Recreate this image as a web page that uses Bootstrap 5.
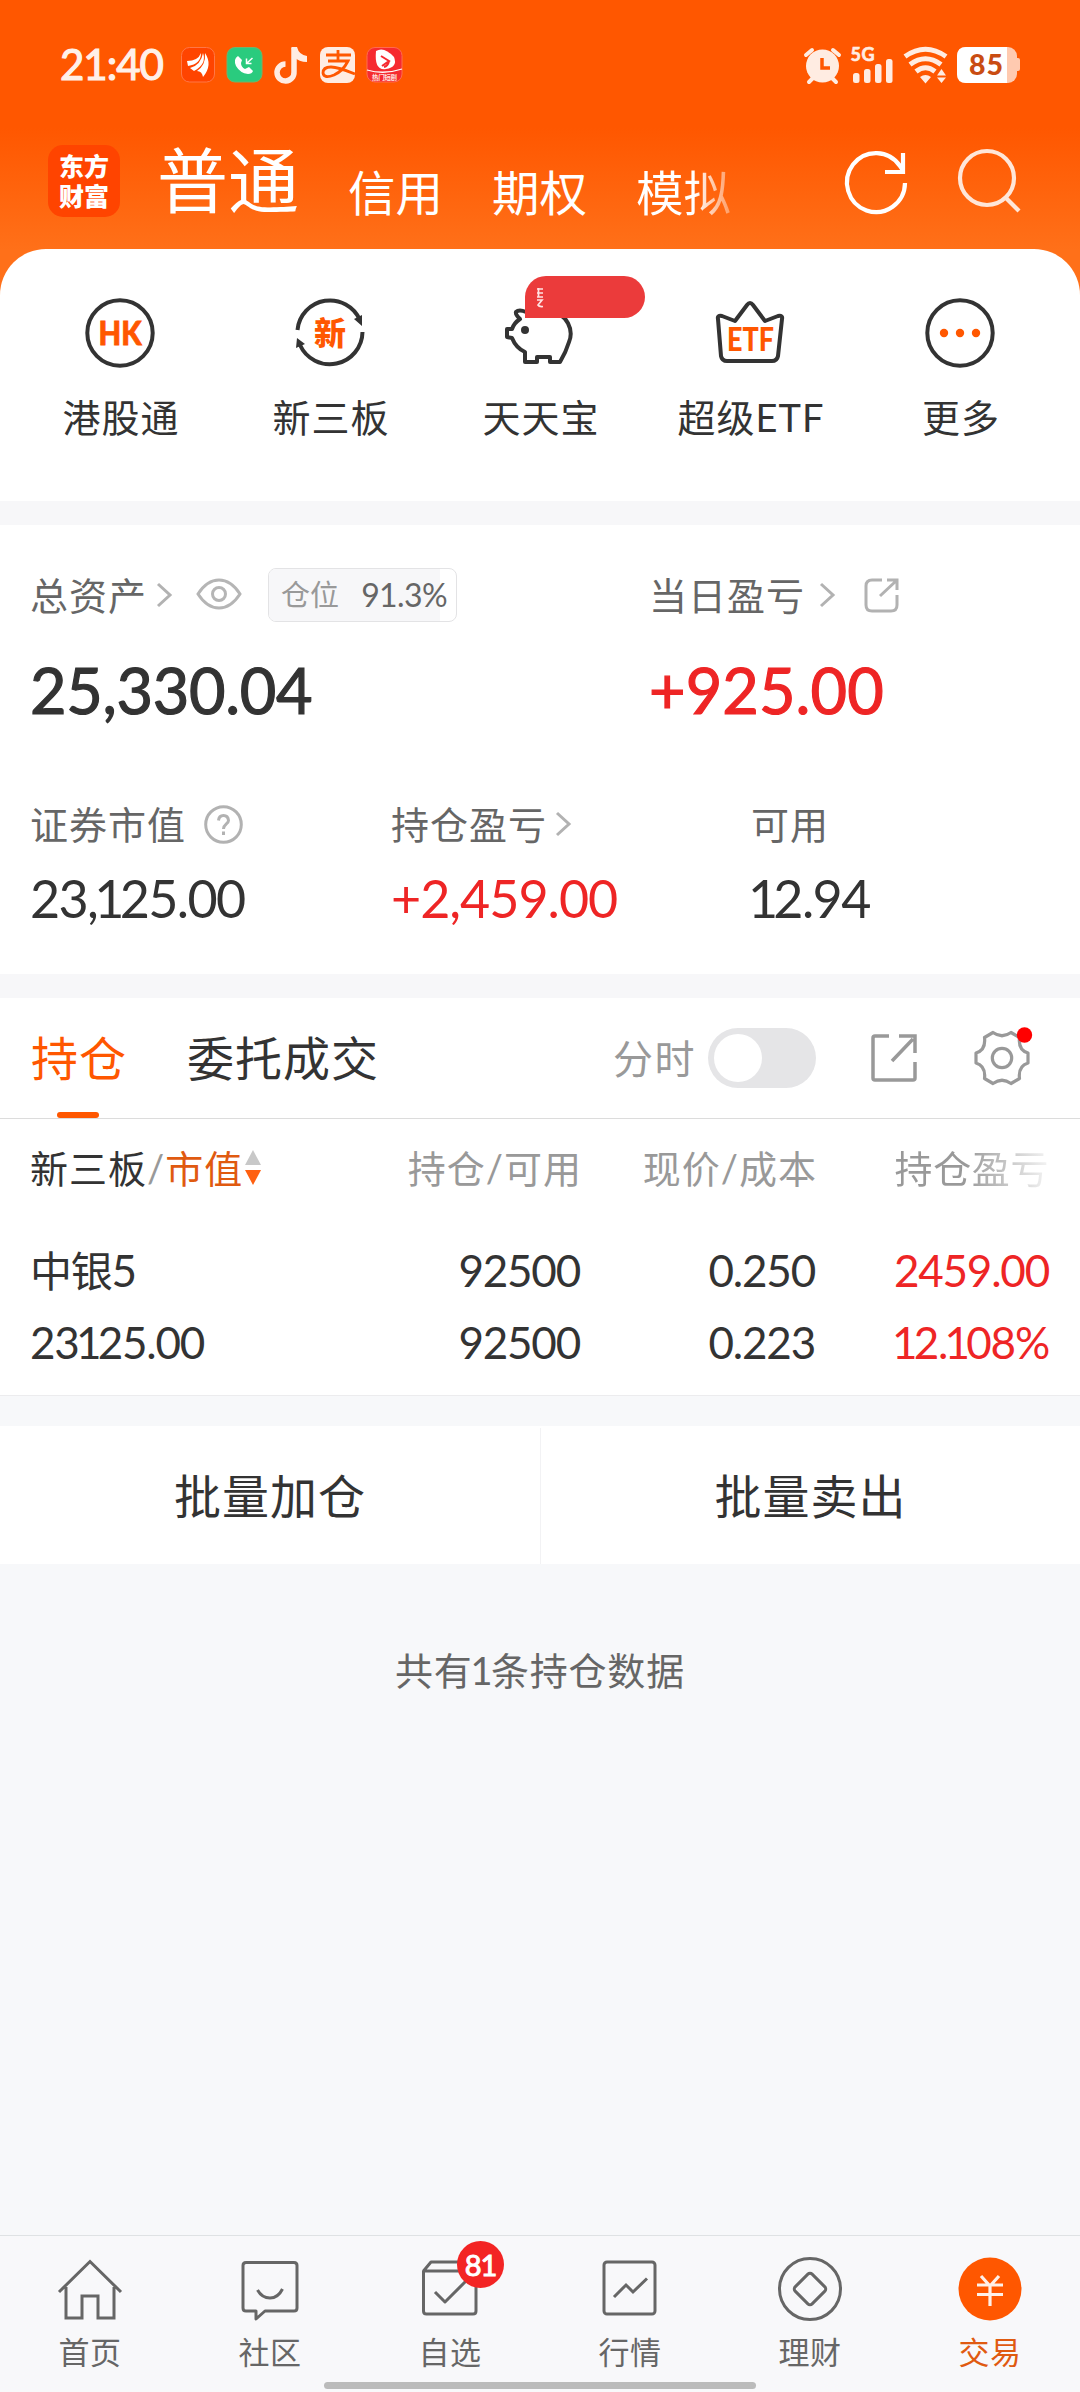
<!DOCTYPE html>
<html lang="zh-CN">
<head>
<meta charset="utf-8">
<meta name="viewport" content="width=device-width, initial-scale=1">
<title>东方财富 交易</title>
<link href="https://cdn.jsdelivr.net/npm/bootstrap@5.3.0/dist/css/bootstrap.min.css" rel="stylesheet">
<style>
:root{--ink:#333;--mid:#666;--soft:#999;--brand:#ff5700;--up:#ee2525}
body{font-family:Lato,"Noto Sans CJK SC",sans-serif;color:var(--ink);background:#f7f8fa;width:1080px;height:2392px;overflow:hidden;line-height:1}
svg{display:block;flex:none;overflow:visible}
.hero{height:295px;background:linear-gradient(#ff5700 0,#ff5700 128px,#ff7019 250px);margin-bottom:-46px}
.status{height:130px;padding:0 59px 0 60px}
.clock{font-size:42px;color:#fff0e8;width:121px;letter-spacing:-1px;-webkit-text-stroke:1.2px #fff0e8;margin-top:-3px}
.mkt{height:119px;padding:0 58px 0 48px}
.brandtile{width:72px;height:72px;border-radius:15px;background:#ff4400;color:#fff;font-size:25px;font-weight:900;line-height:30px;padding-top:6px;margin-top:-17px}
.mkt-on{font-size:71px;margin-left:37px;line-height:72px;margin-top:-20px;width:144px}
.mkt-tab{font-size:47.5px;margin-left:48px;line-height:48px;margin-top:7px;width:96px}
.mkt-on+.mkt-tab{margin-left:47px}
.fade-tab{background:linear-gradient(90deg,#fff 0,#fff 58px,rgba(255,255,255,.4) 92px);-webkit-background-clip:text;background-clip:text;color:transparent}
.sheet{height:252px;border-radius:46px 46px 0 0;padding:47px 15px 0}
.quick{width:210px}
.quick-t{font-size:38px;letter-spacing:1px;line-height:44px;margin-top:25px;padding-left:2px}
.tag{left:90px;top:-20px;width:120px;height:42px;border-radius:21px 21px 21px 0;background:#eb3b3b}
.gap24{height:24px;background:#f7f7f9}
.assets{height:449px;padding:42px 32px 0 30px}
.lbl{font-size:38px;letter-spacing:1px;color:var(--mid);line-height:56px;height:56px}
.big{font-size:63px;line-height:64px;letter-spacing:-.3px;-webkit-text-stroke:1.2px currentColor;margin-top:35px}
.big.c-up{letter-spacing:.1px}
.mid-n{font-size:52px;line-height:54px;letter-spacing:-1.6px;margin-top:19px}
.mid-n.c-up{letter-spacing:-1px}
.one{margin:0 -.06em}
.c-up{color:var(--up)}
.pos{width:189px;height:54px;border:1px solid #e3e3e5;border-radius:8px;background:#fff;margin-left:26px;overflow:hidden;color:var(--mid)}
.pos-fill{height:52px;background:#f7f7f9}
.pos-txt{inset:0;font-size:32px;letter-spacing:-.6px;padding:0 9px 0 12px}
.pos-txt small{font-size:29px;letter-spacing:0;color:var(--soft)}
.tabs{height:121px;border-bottom:1px solid #dcdcdc;padding:0 50px 0 31px}
.tab-t{font-size:47px;letter-spacing:1px;line-height:120px}
.tab-on{color:var(--brand)}
.tab-on::after{content:"";position:absolute;left:26px;bottom:0;width:42px;height:6px;border-radius:3px;background:var(--brand)}
.toggle{width:108px;height:60px;border-radius:30px;background:#e5e5e7;padding:6px}
.toggle span{width:48px;height:48px;border-radius:50%;background:#fff}
.hold{height:277px;padding:0 31px 0 30px;border-bottom:1px solid #ececee}
.hold-h{font-size:38px;letter-spacing:1px;color:var(--soft);height:98px}
.hold-h .text-end{padding-left:2px;margin-right:-2px}
.hold-r{font-size:44px;height:72px;letter-spacing:-1.2px}
.hold-r:nth-child(2){margin-top:17px}
.k1{width:320px}.k2{width:230px}.k3{width:235px}.k4{width:234px}
.hold-h .k2,.hold-h .k3{width:232px}.hold-h .k3{width:237px}
.fade-h{background:linear-gradient(90deg,#999 0,#999 70px,#f2f2f2 152px);-webkit-background-clip:text;background-clip:text;color:transparent;letter-spacing:.6px}
.batch{height:138px;margin-top:30px;font-size:47px;letter-spacing:1px;padding-top:2px}
.batch>div+div{border-left:1px solid #f2f2f4}
.tail{font-size:38px;letter-spacing:.8px;color:var(--mid);margin-top:84px;line-height:44px}
.dock{height:157px;background:#f8f8fa;border-top:1px solid #dfe2e4;color:var(--mid)}
.dock-i{width:180px;font-size:31px;letter-spacing:.6px;padding-top:17px}
.dock-i span{line-height:36px;margin-top:13px}
.num{left:97px;top:5px;width:47px;height:47px;border-radius:50%;background:#f32424;color:#fff;-webkit-text-stroke:1px #fff;font-size:29px;letter-spacing:-1px}
.grip{left:324px;bottom:3px;width:432px;height:7px;border-radius:4px;background:#bbb}
</style>
<script src="https://cdn.jsdelivr.net/npm/bootstrap@5.3.0/dist/js/bootstrap.bundle.min.js"></script>
</head>
<body class="d-flex flex-column">

<header class="hero">
  <div class="status d-flex align-items-center justify-content-between">
    <div class="d-flex align-items-center">
      <div class="clock">21:40</div>
      <svg width="222" height="36" viewBox="0 0 222 36">
        <rect x=".5" y=".5" width="33" height="34.500" rx="8" fill="#ff4400" stroke="#ff7747"/>
        <path d="M6 14Q17 14 20 6Q20 17 7 19zM9 21Q20 18 22 6Q26 17 13 24zM16 24Q25 18 24 6Q32 18 22 30Q21 24 16 24z" fill="#fff"/>
        <rect x="46" y=".5" width="35" height="34.500" rx="8" fill="#2acb7e" stroke="#6fb56b"/>
        <path d="M57 9Q52 12 55 19Q59 26 67 27Q71 27 72 24L68 20L64 22Q60 20 60 16L61 13z" fill="#fff"/><path d="M71.500 11L66 16M65.500 11.500V16.500H70.500" stroke="#fff" stroke-width="1.500" fill="none"/>
        <path d="M113 0V24A8.500 8.500 0 1 1 104.500 16" fill="none" stroke="#ffece2" stroke-width="5.500" transform="translate(0 1)"/><path d="M110.300 0H116Q118 8 126 9V15Q118 15 113 10z" fill="#ffece2"/>
        <rect x="139" y="0" width="35" height="36" rx="8" fill="#ffece2"/>
        <path d="M145 8H170M157 3V14M147 14H167Q162 24 153 28Q143 32 142 26Q142 20 150 20Q157 20 174 27" fill="none" stroke="#ff5700" stroke-width="2.800"/>
        <rect x="186" y=".5" width="35" height="34.500" rx="8" fill="#f62a30" stroke="#ff6a50"/>
        <path d="M195 4Q203 -1 213 10Q217 20 205 22Q193 24 195 4z" fill="#fff"/><path d="M200 9L208 14L201 19M208 14Q207 19 203 20" stroke="#f62a30" stroke-width="2" fill="none"/><path d="M186 23Q203 28 221 22" stroke="#fff" stroke-width="1.300" fill="none"/><text x="191" y="33" font-size="6.500" font-weight="700" fill="#ffe0dc" textLength="25" font-family="Noto Sans CJK SC">热门短剧</text>
      </svg>
    </div>
    <svg width="217" height="38" viewBox="804 46 217 38">
      <g fill="#ffece2">
        <circle cx="822.500" cy="66" r="16.500"/>
        <path d="M806 55L812 50M839 55L833 50M809 82L814 77M836 82L831 77" stroke="#ffece2" stroke-width="4" stroke-linecap="round"/>
        <path d="M822 58V68H830" fill="none" stroke="#ff5700" stroke-width="3.500"/>
        <text x="850.500" y="60.500" font-size="18" font-weight="700" textLength="24" stroke="#ffece2" stroke-width=".6">5G</text>
        <rect x="853" y="73" width="6.500" height="10" rx="2.500"/><rect x="864" y="69" width="6.500" height="14" rx="2.500"/><rect x="875" y="64" width="6.500" height="19" rx="2.500"/><rect x="886" y="59" width="6.500" height="24" rx="2.500"/>
        <g fill="none" stroke="#ffece2" stroke-width="5"><path d="M905 56.500Q925.500 42 946 56.500"/><path d="M910 64.500Q925.500 53 941 64.500"/><path d="M916 71.500Q925.500 64 935 71.500"/></g>
        <path d="M920 77Q925.500 73 931 77L925.500 83.500zM937 75.500L941.500 69L946 75.500zM937 77.500H946L941.500 83z"/>
        <rect x="957" y="47" width="60" height="36" rx="9" fill="#ffcab0"/><rect x="1015" y="58" width="5" height="13" rx="2" fill="#ffcab0"/>
        <path d="M966 47H1007V83H966Q957 83 957 74V56Q957 47 966 47z" fill="#fff"/>
        <text x="969" y="75" font-size="28.500" font-weight="900" textLength="34" fill="#c94c12">85</text>
      </g>
    </svg>
  </div>
  <div class="mkt d-flex align-items-center text-white">
    <div class="brandtile text-center">东方<br>财富</div>
    <div class="mkt-on">普通</div>
    <div class="mkt-tab">信用</div>
    <div class="mkt-tab">期权</div>
    <div class="mkt-tab fade-tab">模拟</div>
    <svg class="ms-auto" width="177" height="119" viewBox="845 130 177 119" fill="none" stroke="#fff" stroke-width="4.200">
      <path d="M905 183A29 29.500 0 1 1 900 166L903.500 171M903 153V172H885"/>
      <g stroke="#ffe6d8"><circle cx="987" cy="178" r="27"/><path d="M1006 198L1019 211"/></g>
    </svg>
  </div>
</header>

<section class="sheet bg-white d-flex flex-shrink-0">
  <div class="quick d-flex flex-column align-items-center">
    <svg width="74" height="74" viewBox="-37 -37 74 74"><circle r="32.700" fill="none" stroke="#333" stroke-width="4"/><text x="-21.500" y="11.500" font-size="32" font-family="Lato" font-weight="900" textLength="43" lengthAdjust="spacingAndGlyphs" fill="#ff5700" stroke="#ff5700" stroke-width=".8">HK</text></svg>
    <div class="quick-t">港股通</div>
  </div>
  <div class="quick d-flex flex-column align-items-center">
    <svg width="74" height="74" viewBox="-37 -37 74 74"><path d="M-32.500 -3A32.700 32.700 0 0 1 30 -13M32.500 -1A32.700 32.700 0 0 1 -30 12" fill="none" stroke="#333" stroke-width="4"/><path d="M24 -14L32 -18V-7zM-25 11L-33 5L-34 15z" fill="#333"/><text x="-16" y="12" font-size="32" font-family="Noto Sans CJK SC" font-weight="900" fill="#ff5700">新</text></svg>
    <div class="quick-t">新三板</div>
  </div>
  <div class="quick position-relative d-flex flex-column align-items-center">
    <svg width="74" height="74" viewBox="503 296 74 74"><path d="M516 312Q519 309 526 312H552C567 314 574 330 569 342Q566 352 560 362H550V357H537V362H525V352Q516 348 512 338L507 337V329H512Q514 323 520 319Q515 314 516 312z" fill="none" stroke="#333" stroke-width="4" stroke-linejoin="round"/><circle cx="525" cy="330" r="4" fill="#333"/></svg>
    <div class="tag position-absolute"><svg width="120" height="42" viewBox="0 0 120 42" fill="none" stroke="#ffe4e4" stroke-width="1.700"><path d="M12 13H18M12 17H18M13.500 12V21M12 21H18M12 24H17L13 29Q14 31 18 30.500"/></svg></div>
    <div class="quick-t">天天宝</div>
  </div>
  <div class="quick d-flex flex-column align-items-center">
    <svg width="74" height="74" viewBox="713 296 74 74"><path d="M718 319Q717 315 722 316L735 321L747 305Q750 301 753 305L765 321L778 316Q783 315 782 319L778 356Q777 361 772 361H727Q722 361 721 356z" fill="none" stroke="#333" stroke-width="4" stroke-linejoin="round"/><text x="727" y="351" font-size="32" font-weight="900" font-family="Lato" textLength="47" lengthAdjust="spacingAndGlyphs" fill="#ff5700">ETF</text></svg>
    <div class="quick-t">超级ETF</div>
  </div>
  <div class="quick d-flex flex-column align-items-center">
    <svg width="74" height="74" viewBox="-37 -37 74 74"><circle r="32.700" fill="none" stroke="#333" stroke-width="4"/><g fill="#ff5700"><circle cx="-16" r="4.200"/><circle r="4.200"/><circle cx="16" r="4.200"/></g></svg>
    <div class="quick-t">更多</div>
  </div>
</section>

<div class="gap24 flex-shrink-0"></div>

<section class="assets bg-white flex-shrink-0">
  <div class="d-flex">
    <div style="width:619px">
      <div class="lbl d-flex align-items-center">总资产
        <svg width="15" height="26" viewBox="0 0 15 26" style="margin-left:10px" fill="none" stroke="#b2b2b2" stroke-width="3"><path d="M1 2L13 13L1 24"/></svg>
        <svg width="46" height="34" viewBox="0 0 46 34" style="margin-left:24px;margin-top:-2px" fill="none" stroke="#b5b5b5" stroke-width="3"><path d="M2 17Q11 3 23 3T44 17Q35 31 23 31T2 17z"/><ellipse cx="23" cy="17" rx="6.500" ry="6.500"/></svg>
        <div class="pos position-relative">
          <div class="pos-fill" style="width:91.3%"></div>
          <div class="pos-txt position-absolute d-flex align-items-center justify-content-between"><small>仓位</small><span>91.3%</span></div>
        </div>
      </div>
      <div class="big">25,330.04</div>
    </div>
    <div>
      <div class="lbl d-flex align-items-center">当日盈亏
        <svg width="15" height="26" viewBox="0 0 15 26" style="margin-left:15px" fill="none" stroke="#b2b2b2" stroke-width="3"><path d="M1 2L13 13L1 24"/></svg>
        <svg width="35" height="35" viewBox="0 0 35 35" style="margin-left:29px" fill="none" stroke="#b2b2b2" stroke-width="3"><path d="M18 2H8Q2 2 2 8V27Q2 33 8 33H27Q33 33 33 27V17M16 18L32 3M23 2H33V12"/></svg>
      </div>
      <div class="big c-up">+925.00</div>
    </div>
  </div>
  <div class="d-flex" style="margin-top:74px">
    <div style="width:361px">
      <div class="lbl d-flex align-items-center">证券市值
        <svg width="39" height="39" viewBox="0 0 39 39" style="margin-left:18px" fill="none" stroke="#b2b2b2" stroke-width="3"><circle cx="19.500" cy="19.500" r="17.800"/><path d="M14.500 15.500Q15 10.500 19.500 10.500T24.500 15.500C24.500 19 19.500 19 19.500 24M19.500 26.500V30"/></svg>
      </div>
      <div class="mid-n">23,<span class="one">1</span>25.00</div>
    </div>
    <div style="width:360px">
      <div class="lbl d-flex align-items-center">持仓盈亏
        <svg width="15" height="26" viewBox="0 0 15 26" style="margin-left:9px" fill="none" stroke="#b2b2b2" stroke-width="3"><path d="M1 2L13 13L1 24"/></svg>
      </div>
      <div class="mid-n c-up">+2,459.00</div>
    </div>
    <div>
      <div class="lbl">可用</div>
      <div class="mid-n"><span class="one">1</span>2.94</div>
    </div>
  </div>
</section>

<div class="gap24 flex-shrink-0"></div>

<nav class="tabs bg-white d-flex align-items-center flex-shrink-0">
  <div class="tab-t tab-on position-relative">持仓</div>
  <div class="tab-t" style="margin-left:60px">委托成交</div>
  <div class="ms-auto d-flex align-items-center">
    <div style="font-size:40px;letter-spacing:1.500px;color:#999;margin-right:12px;padding-top:2px">分时</div>
    <div class="toggle"><span class="d-block"></span></div>
    <svg width="46" height="48" viewBox="0 0 46 48" style="margin-left:55px" fill="none" stroke="#999" stroke-width="3.500"><path d="M18 2H4Q2 2 2 4V44Q2 46 4 46H42Q44 46 44 44V28M21 27L42 5M28 2H44V19"/></svg>
    <svg width="56" height="56" viewBox="-28 -28 56 56" style="margin-left:57px" fill="none" stroke="#999" stroke-width="3.200"><path d="M-9 -25.500Q0 -19 9 -25.500L17.500 -20.500Q16 -8 26 -5V5Q16 8 17.500 20.500L9 25.500Q0 19 -9 25.500L-17.500 20.500Q-16 8 -26 5V-5Q-16 -8 -17.500 -20.500z" stroke-linejoin="round"/><circle r="9.700"/><circle cx="22.500" cy="-23" r="7.700" fill="#f00" stroke="none"/></svg>
  </div>
</nav>

<section class="hold bg-white flex-shrink-0">
  <div class="hold-h d-flex align-items-center">
    <div class="k1 d-flex align-items-center"><span style="color:#333">新三板</span><span>/</span><span style="color:#e05a10">市值</span>
      <svg width="16" height="36" viewBox="0 0 16 36" style="margin-left:2px"><path d="M8 0L16 15H0z" fill="#c8c8c8"/><path d="M0 20H16L8 35z" fill="#ff6010"/></svg></div>
    <div class="k2 text-end">持仓/可用</div>
    <div class="k3 text-end">现价/成本</div>
    <div class="k4 text-end"><span class="fade-h">持仓盈亏</span></div>
  </div>
  <div class="hold-r d-flex align-items-center">
    <div class="k1"><span style="font-size:42px">中银</span>5</div><div class="k2 text-end">92500</div><div class="k3 text-end">0.250</div><div class="k4 text-end c-up">2459.00</div>
  </div>
  <div class="hold-r d-flex align-items-center">
    <div class="k1">23<span class="one">1</span>25.00</div><div class="k2 text-end">92500</div><div class="k3 text-end">0.223</div><div class="k4 text-end c-up"><span class="one">1</span>2.<span class="one">1</span>08%</div>
  </div>
</section>

<div class="batch bg-white d-flex flex-shrink-0 align-items-stretch">
  <div class="w-50 d-flex align-items-center justify-content-center">批量加仓</div>
  <div class="w-50 d-flex align-items-center justify-content-center">批量卖出</div>
</div>

<div class="tail text-center">共有<span class="one">1</span>条持仓数据</div>

<footer class="dock mt-auto d-flex position-relative flex-shrink-0">
  <div class="dock-i d-flex flex-column align-items-center">
    <svg width="68" height="68" viewBox="-34 -34 68 68" fill="none" stroke="#666" stroke-width="3"><path d="M-31 5L0 -25.500L31 5M-24 0V31H-8V9H8V31H24V0"/></svg><span>首页</span></div>
  <div class="dock-i d-flex flex-column align-items-center">
    <svg width="68" height="68" viewBox="-34 -34 68 68" fill="none" stroke="#666" stroke-width="3"><path d="M-24 -24.500H24Q27 -24.500 27 -21.500V21Q27 24 24 24H-5L-14 32V24H-24Q-27 24 -27 21V-21.500Q-27 -24.500 -24 -24.500zM-12.500 3Q-8 11 0 11T12.500 2" stroke-linejoin="round"/></svg><span>社区</span></div>
  <div class="dock-i position-relative d-flex flex-column align-items-center">
    <svg width="68" height="68" viewBox="-34 -34 68 68" fill="none" stroke="#666" stroke-width="3"><path d="M-26.500 -16L-19 -25H19L26 -16V24Q26 27 23 27H-23.500Q-26.500 27 -26.500 24V-16H26M-15 5L-5 15L16 -6" stroke-linejoin="round"/></svg>
    <div class="num position-absolute d-flex align-items-center justify-content-center">81</div><span>自选</span></div>
  <div class="dock-i d-flex flex-column align-items-center">
    <svg width="68" height="68" viewBox="-34 -34 68 68" fill="none" stroke="#666" stroke-width="3"><rect x="-26" y="-25" width="51" height="52" rx="3"/><path d="M-16 10L-4 -2L3 5L17 -8.500"/></svg><span>行情</span></div>
  <div class="dock-i d-flex flex-column align-items-center">
    <svg width="68" height="68" viewBox="-34 -34 68 68" fill="none" stroke="#666" stroke-width="3"><circle cy="2" r="30.500"/><rect x="-12" y="-12" width="24" height="24" rx="3" transform="translate(0 2) rotate(45)"/></svg><span>理财</span></div>
  <div class="dock-i d-flex flex-column align-items-center">
    <svg width="68" height="68" viewBox="-34 -34 68 68" fill="none" stroke="#fff0e8" stroke-width="3.200"><circle cy="2" r="31.500" fill="#ff5700" stroke="none"/><path d="M-9 -11L0 -1L9 -11M0 -1V19M-13 -2H13M-13 7.500H13"/></svg><span style="color:#e05a10">交易</span></div>
  <div class="grip position-absolute"></div>
</footer>
</body>
</html>
